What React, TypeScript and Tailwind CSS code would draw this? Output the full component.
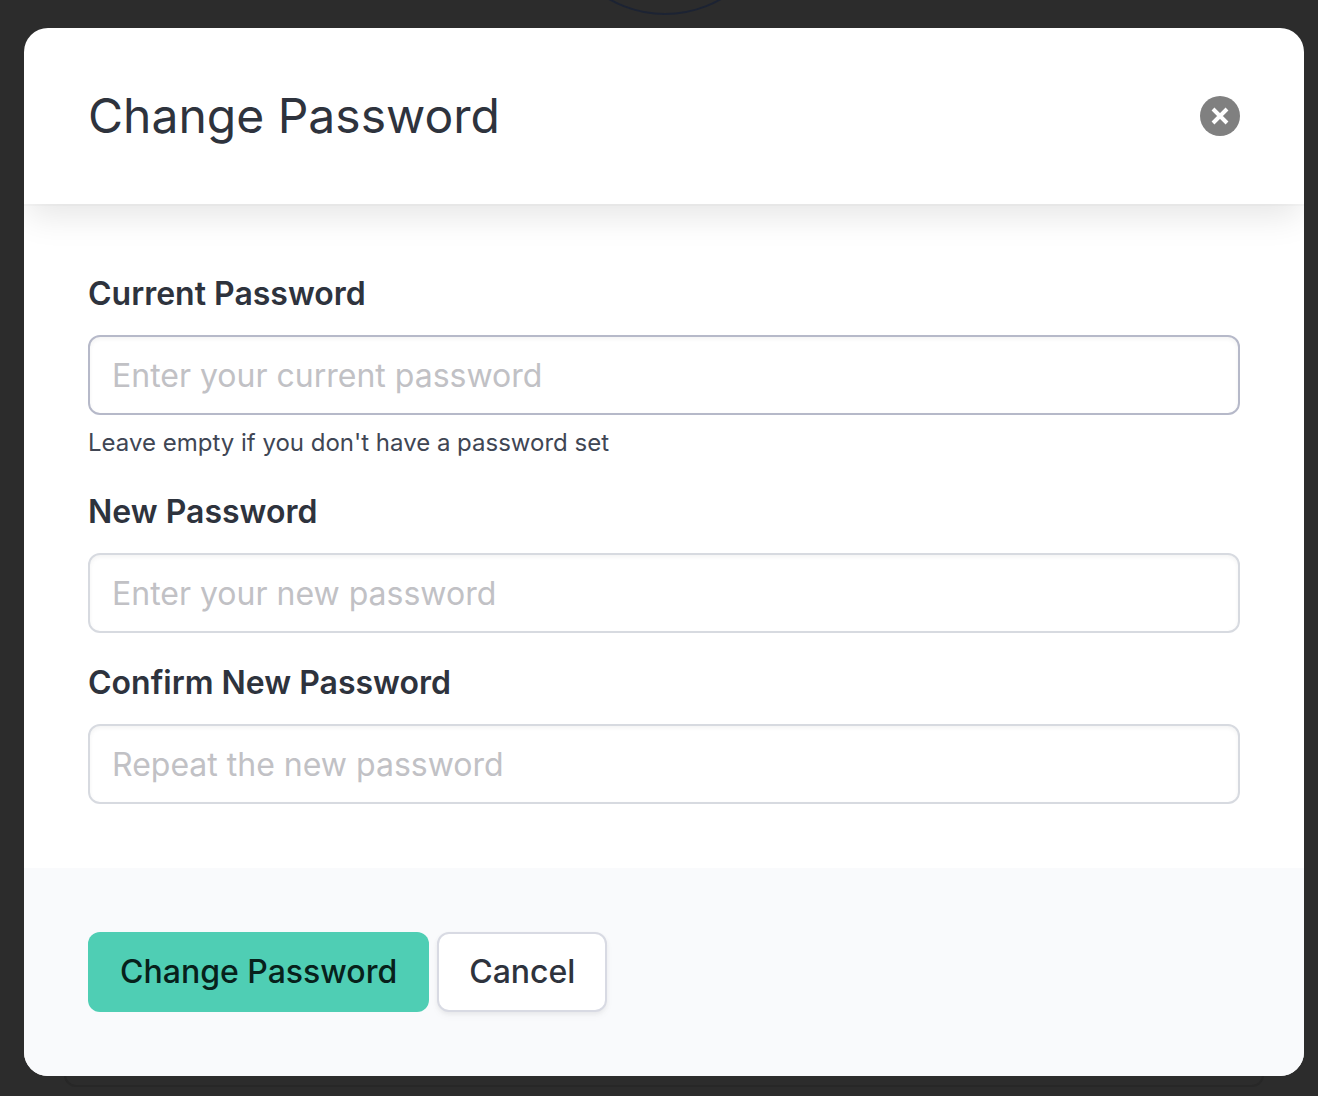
import React from "react";

type FieldProps = { id: string; label: string; placeholder: string; hint?: string; active?: boolean };

function Field({ id, label, placeholder, hint, active }: FieldProps) {
  return (
    <div>
      <label htmlFor={id} className="mb-4 block text-[32px] leading-[51px] font-semibold text-[#2e333d]">
        {label}
      </label>
      <input
        id={id}
        type="password"
        placeholder={placeholder}
        aria-describedby={hint ? id + "-hint" : undefined}
        className={
          "block h-20 w-full rounded-xl border-2 bg-white px-[22px] text-[32px] text-[#2e333d] shadow-[inset_0_2px_4px_rgba(10,10,10,0.05)] outline-none placeholder:text-[#c1c1c5] " +
          (active ? "border-[#b6b9c9]" : "border-[#d7dae0]")
        }
      />
      {hint && (
        <p id={id + "-hint"} className="mt-2 text-2xl leading-[39px] text-[#404654]">
          {hint}
        </p>
      )}
    </div>
  );
}

export default function App() {
  return (
    <div className="relative min-h-screen overflow-hidden bg-[#2c2c2c] pt-7 pr-[14px] pb-5 pl-6 font-['Inter',sans-serif]">
      <svg className="absolute top-0 left-1/2" width="120" height="20" viewBox="0 0 120 20" fill="none" overflow="visible" aria-hidden="true">
        <circle cx="6" cy="-98" r="112" stroke="#1c2333" strokeWidth="2" />
      </svg>
      <div className="absolute right-[54px] bottom-[9px] left-16 h-10 rounded-xl border-2 border-[#272727]" />
      <div role="dialog" aria-modal="true" aria-labelledby="title" className="relative overflow-hidden rounded-3xl bg-white">
        <header className="relative flex items-center justify-between p-16 shadow-[0_16px_32px_-4px_rgba(10,10,10,0.1),0_0_0_2px_rgba(10,10,10,0.02)]">
          <h1 id="title" className="text-5xl leading-12 text-[#2e333d]">Change Password</h1>
          <button type="button" aria-label="Close" className="flex size-10 items-center justify-center rounded-full bg-[#808080]">
            <svg width="20" height="20" viewBox="0 0 20 20" aria-hidden="true">
              <path d="M3 3L17 17M17 3L3 17" stroke="white" strokeWidth="4" />
            </svg>
          </button>
        </header>
        <form onSubmit={(e) => e.preventDefault()}>
          <div className="flex flex-col gap-6 p-16">
            <Field id="current" label="Current Password" placeholder="Enter your current password" hint="Leave empty if you don't have a password set" active />
            <Field id="new" label="New Password" placeholder="Enter your new password" />
            <Field id="confirm" label="Confirm New Password" placeholder="Repeat the new password" />
          </div>
          <footer className="flex gap-2 bg-[#f9fafc] p-16">
            <button type="submit" className="h-20 rounded-xl bg-[#4fceb4] px-8 text-[32px] font-medium text-[#07211b]">
              Change Password
            </button>
            <button type="button" className="h-20 rounded-xl border-2 border-[#d8dae3] bg-white px-[30px] text-[32px] font-medium text-[#2e333d] shadow-[0_2px_4px_rgba(10,10,10,0.05),0_4px_8px_rgba(10,10,10,0.03)]">
              Cancel
            </button>
          </footer>
        </form>
      </div>
    </div>
  );
}
